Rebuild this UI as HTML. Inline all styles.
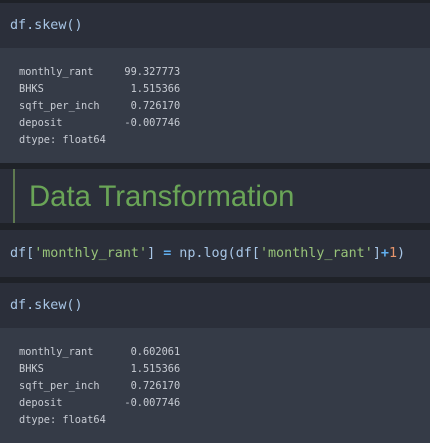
<!DOCTYPE html>
<html><head><style>
*{margin:0;padding:0}
body{width:430px;height:443px;background:#1f2228;position:relative;overflow:hidden}
.b{position:absolute;left:0;width:430px}
.code{background:#2b2f3a}
.out{background:#353b47}
pre{position:absolute;font-family:"DejaVu Sans Mono","Liberation Mono",monospace;white-space:pre}
.c{font-size:13.4px;color:#a8c6e6;left:10px}
.o{font-size:10.3px;line-height:17px;color:#c8ccd4;left:19px}
.s{color:#98c379}.p{color:#61afef;font-weight:bold}.n{color:#e8956b}
</style></head><body>
<div class="b code" style="top:3px;height:45px"></div>
<div class="b out" style="top:48px;height:115px"></div>
<div class="b code" style="top:169px;height:54px"></div>
<div style="position:absolute;left:13px;top:169px;width:2px;height:54px;background:#5f7a50"></div>
<div style="position:absolute;left:29px;top:180px;font-family:'Liberation Sans',sans-serif;font-size:29.3px;color:#6aa557">Data Transformation</div>
<div class="b code" style="top:230px;height:47px"></div>
<div class="b code" style="top:283px;height:45px"></div>
<div class="b out" style="top:328px;height:115px"></div>
<pre class="c" style="top:18px">df.skew()</pre>
<pre class="o" style="top:64px">monthly_rant     99.327773
BHKS              1.515366
sqft_per_inch     0.726170
deposit          -0.007746
dtype: float64</pre>
<pre class="c" style="top:246px">df[<span class="s">'monthly_rant'</span>] <span class="p">=</span> np.log(df[<span class="s">'monthly_rant'</span>]<span class="p">+</span><span class="n">1</span>)</pre>
<pre class="c" style="top:298px">df.skew()</pre>
<pre class="o" style="top:344px">monthly_rant      0.602061
BHKS              1.515366
sqft_per_inch     0.726170
deposit          -0.007746
dtype: float64</pre>
</body></html>
